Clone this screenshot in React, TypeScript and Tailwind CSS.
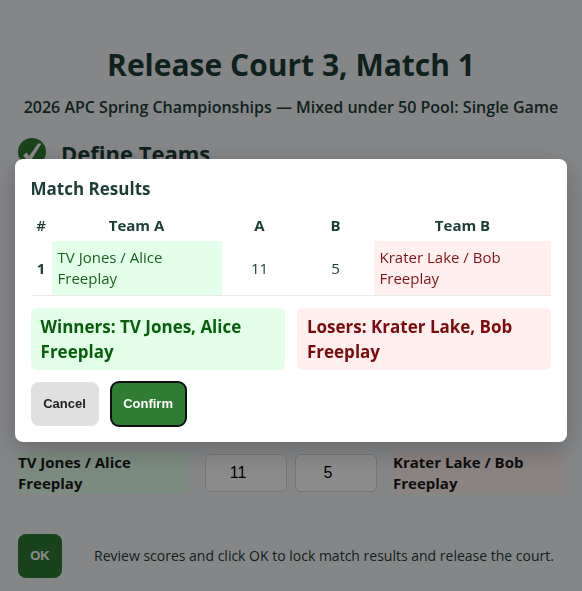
import { useState } from 'react';

const teamA = { label: 'TV Jones / Alice Freeplay', players: 'TV Jones, Alice Freeplay' };
const teamB = { label: 'Krater Lake / Bob Freeplay', players: 'Krater Lake, Bob Freeplay' };

type ScoreInputProps = {
    label: string;
    value: string;
    onChange: (value: string) => void;
};

const ScoreInput = ({ label, value, onChange }: ScoreInputProps) => (
    <input
        type="text"
        inputMode="numeric"
        aria-label={label}
        value={value}
        onChange={(e) => onChange(e.target.value)}
        className="h-[38px] w-[82px] rounded-md border border-[#d5d7da] bg-white pr-4 text-center font-['Liberation_Sans',sans-serif] text-base text-black"
    />
);

type MatchResultsProps = {
    scoreA: string;
    scoreB: string;
    onClose: () => void;
};

const MatchResults = ({ scoreA, scoreB, onClose }: MatchResultsProps) => (
    <div className="fixed inset-0 flex items-center justify-center bg-black/45 pt-[10px]">
        <div
            role="dialog"
            aria-modal="true"
            aria-labelledby="results-title"
            className="w-[95%] max-w-3xl rounded-lg bg-white p-4 shadow-[0_8px_30px_rgba(0,0,0,0.25)]"
        >
            <h2 id="results-title" className="text-[17px] leading-7 font-bold">Match Results</h2>
            <table className="mt-1.5 w-full table-fixed border-collapse text-[15px] leading-[21px]">
                <thead>
                    <tr className="h-8">
                        <th className="w-[21px] font-semibold">#</th>
                        <th className="w-[170px]">Team A</th>
                        <th className="w-[76px]">A</th>
                        <th className="w-[76px]">B</th>
                        <th>Team B</th>
                    </tr>
                </thead>
                <tbody>
                    <tr className="border-b border-[#e8eaea]">
                        <th>1</th>
                        <td className="bg-[#e3ffe9] px-1.5 py-1.5 text-[#1b5e20]">{teamA.label}</td>
                        <td className="text-center">{scoreA}</td>
                        <td className="text-center">{scoreB}</td>
                        <td className="bg-[#ffefee] px-1.5 py-1.5 text-[#7f1416]">{teamB.label}</td>
                    </tr>
                </tbody>
            </table>
            <div className="mt-3 grid grid-cols-2 gap-3 text-[17px] leading-[25px] font-bold">
                <div className="rounded-md bg-[#e3ffe9] px-2.5 py-1.5 text-[#075e0b]">{`Winners: ${teamA.players}`}</div>
                <div className="rounded-md bg-[#ffefee] px-2.5 py-1.5 text-[#7a0a0c]">{`Losers: ${teamB.players}`}</div>
            </div>
            <div className="mt-3 flex gap-3 font-['Liberation_Sans',sans-serif] text-[13px] font-bold">
                <button type="button" onClick={onClose} className="h-11 min-w-[68px] rounded-lg bg-[#e0e0e0] px-3 text-[#222]">
                    Cancel
                </button>
                <button
                    type="button"
                    onClick={onClose}
                    className="h-11 min-w-[75px] rounded-lg bg-[#2e7d32] px-3 text-white outline-2 -outline-offset-1 outline-[#101010]"
                >
                    Confirm
                </button>
            </div>
        </div>
    </div>
);

export default function App() {
    const [scoreA, setScoreA] = useState('11');
    const [scoreB, setScoreB] = useState('5');
    const [open, setOpen] = useState(true);

    return (
        <div className="min-h-screen bg-[#f3f5f8] font-['Open_Sans','Noto_Sans',sans-serif] text-[#1b3d36]">
            <main className="px-[18px] pt-[41px]">
                <h1 className="text-center text-[30px] leading-[48px] font-bold">Release Court 3, Match 1</h1>
                <p className="-mx-2 mt-1.5 text-center text-[16px] leading-6 font-semibold">
                    2026 APC Spring Championships — Mixed under 50 Pool: Single Game
                </p>
                <section className="mt-[19px] flex h-[314px] items-start gap-[15px]">
                    <svg viewBox="0 0 28 28" className="size-7 shrink-0" aria-hidden="true">
                        <circle cx="14" cy="14" r="14" fill="#2e7d32" />
                        <path d="M5 17.5 L8.5 14.5 L11.3 18 L20 5.5 L23.5 5.5 L12.5 23 L10 23 Z" fill="#fff" />
                    </svg>
                    <h2 className="text-[22px] leading-[30px] font-bold">Define Teams</h2>
                </section>
                <section className="flex items-center gap-4">
                    <div className="flex-1 bg-[#e3ffe9] text-[15px] leading-[21px] font-bold text-[#1a1a1a]">{teamA.label}</div>
                    <div className="flex gap-2">
                        <ScoreInput label="Team A score" value={scoreA} onChange={setScoreA} />
                        <ScoreInput label="Team B score" value={scoreB} onChange={setScoreB} />
                    </div>
                    <div className="flex-1 bg-[#ffefee] text-[15px] leading-[21px] font-bold text-[#1a1a1a]">{teamB.label}</div>
                </section>
                <section className="mt-10 flex items-center gap-8">
                    <button
                        type="button"
                        onClick={() => setOpen(true)}
                        className="size-11 shrink-0 rounded-lg bg-[#2e7d32] font-['Liberation_Sans',sans-serif] text-[13px] font-bold text-white"
                    >
                        OK
                    </button>
                    <p className="-mr-4 text-[14px] leading-6">Review scores and click OK to lock match results and release the court.</p>
                </section>
            </main>
            {open && <MatchResults scoreA={scoreA} scoreB={scoreB} onClose={() => setOpen(false)} />}
        </div>
    );
}
